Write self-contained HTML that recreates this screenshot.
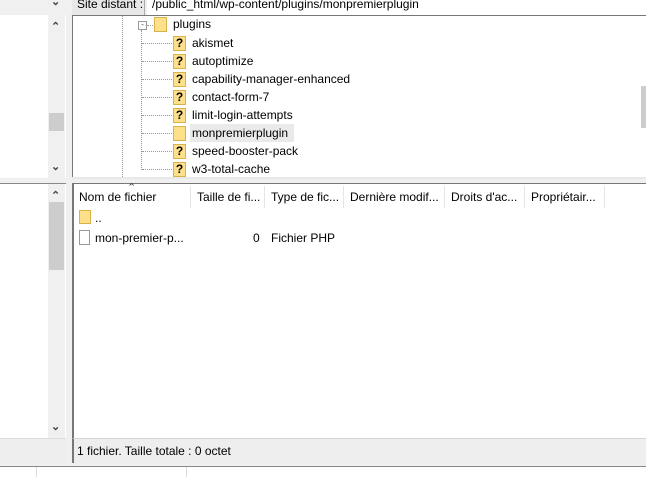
<!DOCTYPE html>
<html><head><meta charset="utf-8"><style>
*{margin:0;padding:0;box-sizing:border-box}
body{width:646px;height:477px;background:#f0f0f0;position:relative;overflow:hidden;font-family:"Liberation Sans",sans-serif;font-size:12px;color:#000}
.a{position:absolute}
.fold{position:absolute;width:13px;height:15px;background:#ffe08a;border:1px solid #d9b24a}
.q{position:absolute;width:13px;height:15px;background:#ffe08a;border:1px solid #d9b24a;font-weight:bold;font-size:12px;line-height:13px;text-align:center}
.t{position:absolute;left:192px;white-space:nowrap}
.dot{position:absolute;border-top:1px dotted #999;width:14px;left:160px}
.hd{position:absolute;top:186px;height:22px;line-height:22px;border-right:1px solid #e5e5e5;padding-left:6px;white-space:nowrap;color:#000}
.arr{position:absolute;font-size:11px;color:#444;font-weight:bold}
</style></head><body>
<div class="a" style="left:0;top:15px;width:66px;height:163px;background:#fff"></div>
<div class="a" style="left:48px;top:15px;width:17px;height:163px;background:#f0f0f0"></div>
<div class="a" style="left:49px;top:113px;width:15px;height:18px;background:#cdcdcd"></div>
<div class="arr" style="left:51px;top:20px">&#8963;</div>
<div class="arr" style="left:51px;top:160px">&#8964;</div>
<div class="arr" style="left:51px;top:-5px">&#8964;</div>
<div class="a" style="left:0;top:183px;width:66px;height:255px;background:#fff;border-top:1px solid #888"></div>
<div class="a" style="left:48px;top:184px;width:17px;height:254px;background:#f0f0f0"></div>
<div class="a" style="left:49px;top:202px;width:15px;height:68px;background:#cdcdcd"></div>
<div class="arr" style="left:51px;top:189px">&#8963;</div>
<div class="arr" style="left:51px;top:420px">&#8964;</div>
<div class="a" style="left:72px;top:0;width:73px;height:15px;background:#e8e8e8;border-right:1px solid #aaa;line-height:8px;padding-left:5px;font-size:12px;white-space:nowrap">Site distant :</div>
<div class="a" style="left:147px;top:0;width:499px;height:15px;background:#fff;line-height:8px;padding-left:5px">/public_html/wp-content/plugins/monpremierplugin</div>
<div class="a" style="left:72px;top:15px;width:574px;height:164px;background:#fff;border-top:1px solid #777;border-left:1px solid #777"></div>
<div class="a" style="left:641px;top:86px;width:5px;height:42px;background:#cdcdcd"></div>
<div class="a" style="left:72px;top:177px;width:574px;height:2px;background:#e8e8e8"></div>
<div class="a" style="left:122px;top:16px;height:161px;border-left:1px dotted #999"></div>
<div class="a" style="left:141px;top:30px;height:140px;border-left:1px dotted #999"></div>
<div class="a" style="left:138px;top:21px;width:9px;height:9px;border:1px solid #999;background:#fff;font-size:8px;line-height:6px;text-align:center;color:#336">-</div>
<div class="a" style="left:147px;top:25px;width:6px;border-top:1px dotted #999"></div>
<div class="fold" style="left:154px;top:17px"></div>
<div class="a" style="left:173px;top:17px">plugins</div>
<div class="dot" style="top:43px;left:142px;width:30px"></div><div class="q" style="left:173px;top:36px">?</div><div class="t" style="top:36px">akismet</div>
<div class="dot" style="top:61px;left:142px;width:30px"></div><div class="q" style="left:173px;top:54px">?</div><div class="t" style="top:54px">autoptimize</div>
<div class="dot" style="top:79px;left:142px;width:30px"></div><div class="q" style="left:173px;top:72px">?</div><div class="t" style="top:72px">capability-manager-enhanced</div>
<div class="dot" style="top:97px;left:142px;width:30px"></div><div class="q" style="left:173px;top:90px">?</div><div class="t" style="top:90px">contact-form-7</div>
<div class="dot" style="top:115px;left:142px;width:30px"></div><div class="q" style="left:173px;top:108px">?</div><div class="t" style="top:108px">limit-login-attempts</div>
<div class="dot" style="top:133px;left:142px;width:30px"></div><div class="fold" style="left:173px;top:126px"></div><div class="a" style="left:190px;top:124px;width:104px;height:18px;background:#eaeaea"></div><div class="t" style="top:126px">monpremierplugin</div>
<div class="dot" style="top:151px;left:142px;width:30px"></div><div class="q" style="left:173px;top:144px">?</div><div class="t" style="top:144px">speed-booster-pack</div>
<div class="dot" style="top:169px;left:142px;width:30px"></div><div class="q" style="left:173px;top:162px">?</div><div class="t" style="top:162px">w3-total-cache</div>
<div class="a" style="left:72px;top:183px;width:574px;height:255px;background:#fff;border-top:1px solid #777;border-left:2px solid #777"></div>
<div class="hd" style="left:73px;width:118px">Nom de fichier</div>
<div class="arr" style="left:127px;top:181px;font-weight:normal">&#8963;</div>
<div class="hd" style="left:191px;width:74px">Taille de fi...</div>
<div class="hd" style="left:265px;width:79px">Type de fic...</div>
<div class="hd" style="left:344px;width:101px">Dernière modif...</div>
<div class="hd" style="left:445px;width:80px">Droits d'ac...</div>
<div class="hd" style="left:525px;width:80px">Propriétair...</div>
<div class="fold" style="left:79px;top:210px;width:12px;height:14px"></div>
<div class="a" style="left:95px;top:211px">..</div>
<div class="a" style="left:79px;top:230px;width:11px;height:15px;border:1px solid #999;background:#fff"></div>
<div class="a" style="left:95px;top:231px">mon-premier-p...</div>
<div class="a" style="left:253px;top:231px">0</div>
<div class="a" style="left:271px;top:231px">Fichier PHP</div>
<div class="a" style="left:0;top:438px;width:66px;height:25px;background:#eee;border-top:1px solid #ddd"></div>
<div class="a" style="left:72px;top:438px;width:574px;height:25px;background:#eee;border-top:1px solid #d5d5d5;border-left:2px solid #777;padding-left:3px;line-height:25px">1 fichier. Taille totale : 0 octet</div>
<div class="a" style="left:0;top:466px;width:646px;height:1px;background:#888"></div>
<div class="a" style="left:0;top:467px;width:646px;height:10px;background:#fff"></div>
<div class="a" style="left:36px;top:467px;height:10px;border-left:1px solid #ddd"></div>
<div class="a" style="left:186px;top:467px;height:10px;border-left:1px solid #ddd"></div>
</body></html>
